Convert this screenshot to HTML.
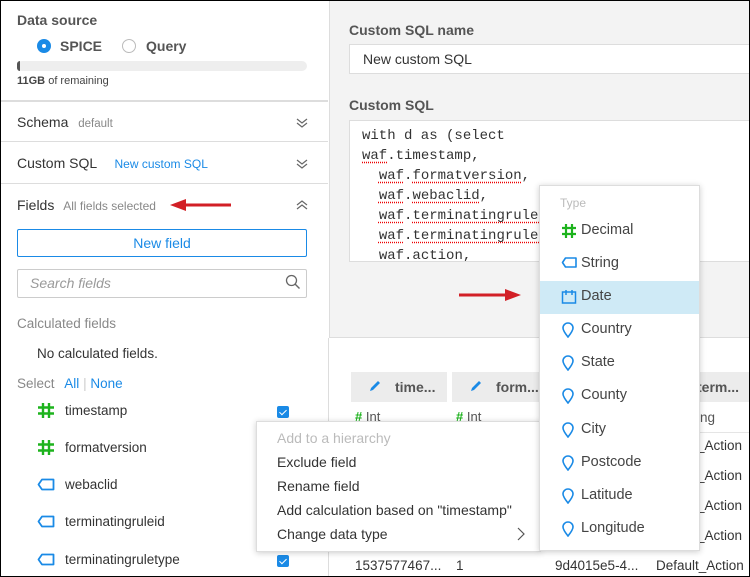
<!DOCTYPE html>
<html><head><meta charset="utf-8"><style>
*{box-sizing:border-box;margin:0;padding:0}
body{width:750px;height:577px;overflow:hidden;position:relative;font-family:"Liberation Sans",Arial,sans-serif;color:#333;background:#fff}
.a{position:absolute;white-space:nowrap}
.frame{position:absolute;left:0;top:0;width:750px;height:577px;border:1px solid #000;pointer-events:none;z-index:50}
.hr{position:absolute;left:0;width:328px;height:1px;background:#ddd}
.chev{position:absolute;width:12px;height:12px}
.mono{font-family:"Liberation Mono",monospace;font-size:14px;color:#333}
.sq{text-decoration:underline dotted #e00;text-underline-offset:3px}
.cb{position:absolute;left:277px;width:12px;height:12px;background:#1a8ae6;border-radius:2px}
.cb:after{content:"";position:absolute;left:4px;top:1.5px;width:3px;height:6px;border:solid #fff;border-width:0 1.5px 1.5px 0;transform:rotate(45deg)}
.menu{position:absolute;background:#fff;border:1px solid #ddd;box-shadow:0 1px 6px rgba(0,0,0,.2)}
.mi{position:absolute;left:20px;font-size:14px;color:#333}
.ti{position:absolute;left:21px;font-size:14.5px;color:#444}
.ti svg{position:absolute;left:0;top:1px}
.ti span{position:absolute;left:20px;top:0}
.row{position:absolute;font-size:13.5px;color:#333;white-space:nowrap}
</style></head><body>

<div class="a" style="left:329px;top:0;width:421px;height:338px;background:#f3f3f3;border-left:1px solid #ddd;border-bottom:1px solid #ddd"></div>
<div class="a" style="left:328px;top:338px;width:1px;height:239px;background:#ddd"></div>

<div class="a" style="left:17px;top:12px;font-size:14px;font-weight:bold;color:#555">Data source</div>
<div class="a" style="left:37px;top:39px;width:14px;height:14px;border-radius:50%;background:#1a8ae6"><div style="position:absolute;left:5px;top:5px;width:4px;height:4px;border-radius:50%;background:#fff"></div></div>
<div class="a" style="left:60px;top:38px;font-size:14px;font-weight:bold;color:#555">SPICE</div>
<div class="a" style="left:122px;top:39px;width:14px;height:14px;border-radius:50%;border:1px solid #bbb;background:#fff"></div>
<div class="a" style="left:146px;top:38px;font-size:14px;font-weight:bold;color:#555">Query</div>
<div class="a" style="left:17px;top:61px;width:290px;height:10px;border-radius:5px;background:#eee"></div>
<div class="a" style="left:17px;top:61px;width:3px;height:10px;border-radius:3px 0 0 3px;background:#555"></div>
<div class="a" style="left:17px;top:75px;font-size:11px;color:#444"><b>11GB</b> of remaining</div>
<div class="hr" style="top:100px;height:2px"></div>

<div class="a" style="left:17px;top:114px;font-size:14px;color:#333">Schema <span style="font-size:11.5px;color:#888;margin-left:6px">default</span></div>
<svg class="chev" style="left:296px;top:117px" viewBox="0 0 12 12"><path d="M1 2l5 4 5-4M1 6l5 4 5-4" fill="none" stroke="#666" stroke-width="1.2"/></svg>
<div class="hr" style="top:141px"></div>
<div class="a" style="left:17px;top:155px;font-size:14px;color:#333">Custom SQL <span style="font-size:12px;color:#1a8ae6;margin-left:14px">New custom SQL</span></div>
<svg class="chev" style="left:296px;top:158px" viewBox="0 0 12 12"><path d="M1 2l5 4 5-4M1 6l5 4 5-4" fill="none" stroke="#666" stroke-width="1.2"/></svg>
<div class="hr" style="top:183px"></div>
<div class="a" style="left:17px;top:197px;font-size:14px;color:#333">Fields <span style="font-size:12px;color:#888;margin-left:5px">All fields selected</span></div>
<svg class="a" style="left:170px;top:199px" width="62" height="12" viewBox="0 0 62 12"><path d="M14 6H61" stroke="#d21f26" stroke-width="3"/><path d="M0 6L16 0V12Z" fill="#d21f26"/></svg>
<svg class="chev" style="left:296px;top:199px" viewBox="0 0 12 12"><path d="M1 6l5-4 5 4M1 10l5-4 5 4" fill="none" stroke="#666" stroke-width="1.2"/></svg>

<div class="a" style="left:17px;top:229px;width:290px;height:28px;border:1px solid #1a8ae6;border-radius:2px;font-size:14px;color:#1a8ae6;text-align:center;line-height:26px">New field</div>
<div class="a" style="left:17px;top:269px;width:290px;height:29px;border:1px solid #ccc;border-radius:2px;font-size:14px;color:#999;font-style:italic;padding-left:12px;line-height:27px">Search fields</div>
<svg class="a" style="left:285px;top:274px" width="16" height="16" viewBox="0 0 16 16"><circle cx="6.5" cy="6.5" r="5" fill="none" stroke="#666" stroke-width="1.3"/><path d="M10 10l4.5 4.5" stroke="#666" stroke-width="1.4"/></svg>

<div class="a" style="left:17px;top:316px;font-size:13.5px;color:#888">Calculated fields</div>
<div class="a" style="left:37px;top:346px;font-size:13.5px;color:#333">No calculated fields.</div>
<div class="a" style="left:17px;top:376px;font-size:13.5px;color:#888">Select <span style="color:#1a8ae6;margin-left:6px">All</span> <span style="color:#ccc">|</span> <span style="color:#1a8ae6">None</span></div>

<svg class="a" style="left:37px;top:402px" width="18" height="17" viewBox="0 0 18 17"><path d="M6 1V16M12 1V16M1 5.5H17M1 11.5H17" stroke="#1db31d" stroke-width="2.4"/></svg>
<div class="row" style="left:65px;top:403px">timestamp</div>
<div class="cb" style="top:406px"></div>
<svg class="a" style="left:37px;top:439px" width="18" height="17" viewBox="0 0 18 17"><path d="M6 1V16M12 1V16M1 5.5H17M1 11.5H17" stroke="#1db31d" stroke-width="2.4"/></svg>
<div class="row" style="left:65px;top:440px">formatversion</div>
<svg class="a" style="left:37px;top:478px" width="18" height="13" viewBox="0 0 18 13"><path d="M5 1.5H16.5V11.5H5L1.5 6.5Z" fill="none" stroke="#1a8ae6" stroke-width="1.8" stroke-linejoin="round"/></svg>
<div class="row" style="left:65px;top:477px">webaclid</div>
<svg class="a" style="left:37px;top:515px" width="18" height="13" viewBox="0 0 18 13"><path d="M5 1.5H16.5V11.5H5L1.5 6.5Z" fill="none" stroke="#1a8ae6" stroke-width="1.8" stroke-linejoin="round"/></svg>
<div class="row" style="left:65px;top:514px">terminatingruleid</div>
<svg class="a" style="left:37px;top:553px" width="18" height="13" viewBox="0 0 18 13"><path d="M5 1.5H16.5V11.5H5L1.5 6.5Z" fill="none" stroke="#1a8ae6" stroke-width="1.8" stroke-linejoin="round"/></svg>
<div class="row" style="left:65px;top:552px">terminatingruletype</div>
<div class="cb" style="top:555px"></div>

<div class="a" style="left:349px;top:22px;font-size:14px;font-weight:bold;color:#555">Custom SQL name</div>
<div class="a" style="left:349px;top:44px;width:401px;height:30px;background:#fff;border:1px solid #ddd;font-size:14px;color:#333;padding-left:13px;line-height:28px">New custom SQL</div>
<div class="a" style="left:349px;top:97px;font-size:14px;font-weight:bold;color:#555">Custom SQL</div>
<div class="a" style="left:349px;top:120px;width:401px;height:142px;background:#fff;border:1px solid #ddd;overflow:hidden">
<div class="mono" style="position:absolute;left:12px;top:5px;line-height:20px;white-space:pre">with d as (select
<span class="sq">waf</span>.timestamp,
  <span class="sq">waf</span>.<span class="sq">formatversion</span>,
  <span class="sq">waf</span>.<span class="sq">webaclid</span>,
  <span class="sq">waf</span>.<span class="sq">terminatingruleid</span>,
  <span class="sq">waf</span>.<span class="sq">terminatingruletype</span>,
  <span class="sq">waf</span>.action,</div></div>
<svg class="a" style="left:459px;top:289px" width="62" height="12" viewBox="0 0 62 12"><path d="M0 6H47" stroke="#d21f26" stroke-width="3"/><path d="M62 6L46 0V12Z" fill="#d21f26"/></svg>

<div class="a" style="left:351px;top:372px;width:96px;height:30px;background:#ececec;font-size:14px;font-weight:bold;color:#555;line-height:30px;padding-left:44px">time...</div>
<svg class="a" style="left:368px;top:379px" width="14" height="14" viewBox="0 0 14 14"><path d="M2 12L3 9L10 2L12 4L5 11Z" fill="#1a8ae6"/></svg>
<div class="a" style="left:452px;top:372px;width:96px;height:30px;background:#ececec;font-size:14px;font-weight:bold;color:#555;line-height:30px;padding-left:44px">form...</div>
<svg class="a" style="left:469px;top:379px" width="14" height="14" viewBox="0 0 14 14"><path d="M2 12L3 9L10 2L12 4L5 11Z" fill="#1a8ae6"/></svg>
<div class="a" style="left:680px;top:372px;width:70px;height:30px;background:#ececec;font-size:14px;font-weight:bold;color:#555;line-height:30px;padding-left:17px">term...</div>
<div class="a" style="left:355px;top:409px;font-size:13px;color:#555"><span style="color:#1db31d;font-weight:bold">#</span> Int</div>
<div class="a" style="left:456px;top:409px;font-size:13px;color:#555"><span style="color:#1db31d;font-weight:bold">#</span> Int</div>
<div class="a" style="left:697px;top:410px;font-size:13.5px;color:#555">ing</div>
<div class="a" style="left:697px;top:438px;font-size:13.5px;color:#333">_Action</div>
<div class="a" style="left:697px;top:468px;font-size:13.5px;color:#333">_Action</div>
<div class="a" style="left:697px;top:498px;font-size:13.5px;color:#333">_Action</div>
<div class="a" style="left:697px;top:528px;font-size:13.5px;color:#333">_Action</div>
<div class="a" style="left:355px;top:558px;font-size:13.5px;color:#333">1537577467...</div>
<div class="a" style="left:456px;top:558px;font-size:13.5px;color:#333">1</div>
<div class="a" style="left:555px;top:558px;font-size:13.5px;color:#333">9d4015e5-4...</div>
<div class="a" style="left:656px;top:558px;font-size:13.5px;color:#333">Default_Action</div>
<div class="a" style="left:680px;top:432px;width:70px;height:1px;background:#e5e5e5"></div>

<div class="menu" style="left:256px;top:421px;width:285px;height:131px">
<div class="mi" style="top:8px;color:#bbb">Add to a hierarchy</div>
<div class="mi" style="top:32px">Exclude field</div>
<div class="mi" style="top:56px">Rename field</div>
<div class="mi" style="top:80px">Add calculation based on "timestamp"</div>
<div class="mi" style="top:104px">Change data type</div>
<svg style="position:absolute;left:260px;top:105px" width="8" height="14" viewBox="0 0 8 14"><path d="M1 1l6 6-6 6" fill="none" stroke="#555" stroke-width="1.2"/></svg>
</div>

<div class="menu" style="left:539px;top:185px;width:161px;height:366px">
<div style="position:absolute;left:20px;top:10px;font-size:12px;color:#bbb">Type</div>
<div style="position:absolute;left:0;top:95px;width:159px;height:33px;background:#cfeaf6"></div>
<div class="ti" style="top:36px"><svg width="16" height="16" viewBox="0 0 16 16"><path d="M5 1V15M11 1V15M1 5H15M1 11H15" stroke="#1db31d" stroke-width="2.2"/></svg><span>Decimal</span></div>
<div class="ti" style="top:69px"><svg width="16" height="14" viewBox="0 0 16 14"><path d="M4.5 2H15V11H4.5L1.5 6.5Z" fill="none" stroke="#1a8ae6" stroke-width="1.6" stroke-linejoin="round"/></svg><span>String</span></div>
<div class="ti" style="top:102px"><svg width="16" height="16" viewBox="0 0 16 16"><rect x="1.5" y="3" width="13" height="11" fill="none" stroke="#1a8ae6" stroke-width="1.5"/><path d="M5 1V6M11 1V6" stroke="#1a8ae6" stroke-width="1.5"/></svg><span>Date</span></div>
<div class="ti" style="top:135px"><svg width="14" height="16" viewBox="0 0 14 16"><path d="M7 15C3 10 2 8 2 6a5 5 0 0 1 10 0c0 2-1 4-5 9Z" fill="none" stroke="#1a8ae6" stroke-width="1.6"/></svg><span>Country</span></div>
<div class="ti" style="top:168px"><svg width="14" height="16" viewBox="0 0 14 16"><path d="M7 15C3 10 2 8 2 6a5 5 0 0 1 10 0c0 2-1 4-5 9Z" fill="none" stroke="#1a8ae6" stroke-width="1.6"/></svg><span>State</span></div>
<div class="ti" style="top:201px"><svg width="14" height="16" viewBox="0 0 14 16"><path d="M7 15C3 10 2 8 2 6a5 5 0 0 1 10 0c0 2-1 4-5 9Z" fill="none" stroke="#1a8ae6" stroke-width="1.6"/></svg><span>County</span></div>
<div class="ti" style="top:235px"><svg width="14" height="16" viewBox="0 0 14 16"><path d="M7 15C3 10 2 8 2 6a5 5 0 0 1 10 0c0 2-1 4-5 9Z" fill="none" stroke="#1a8ae6" stroke-width="1.6"/></svg><span>City</span></div>
<div class="ti" style="top:268px"><svg width="14" height="16" viewBox="0 0 14 16"><path d="M7 15C3 10 2 8 2 6a5 5 0 0 1 10 0c0 2-1 4-5 9Z" fill="none" stroke="#1a8ae6" stroke-width="1.6"/></svg><span>Postcode</span></div>
<div class="ti" style="top:301px"><svg width="14" height="16" viewBox="0 0 14 16"><path d="M7 15C3 10 2 8 2 6a5 5 0 0 1 10 0c0 2-1 4-5 9Z" fill="none" stroke="#1a8ae6" stroke-width="1.6"/></svg><span>Latitude</span></div>
<div class="ti" style="top:334px"><svg width="14" height="16" viewBox="0 0 14 16"><path d="M7 15C3 10 2 8 2 6a5 5 0 0 1 10 0c0 2-1 4-5 9Z" fill="none" stroke="#1a8ae6" stroke-width="1.6"/></svg><span>Longitude</span></div>
</div>

<div class="frame"></div>
</body></html>
